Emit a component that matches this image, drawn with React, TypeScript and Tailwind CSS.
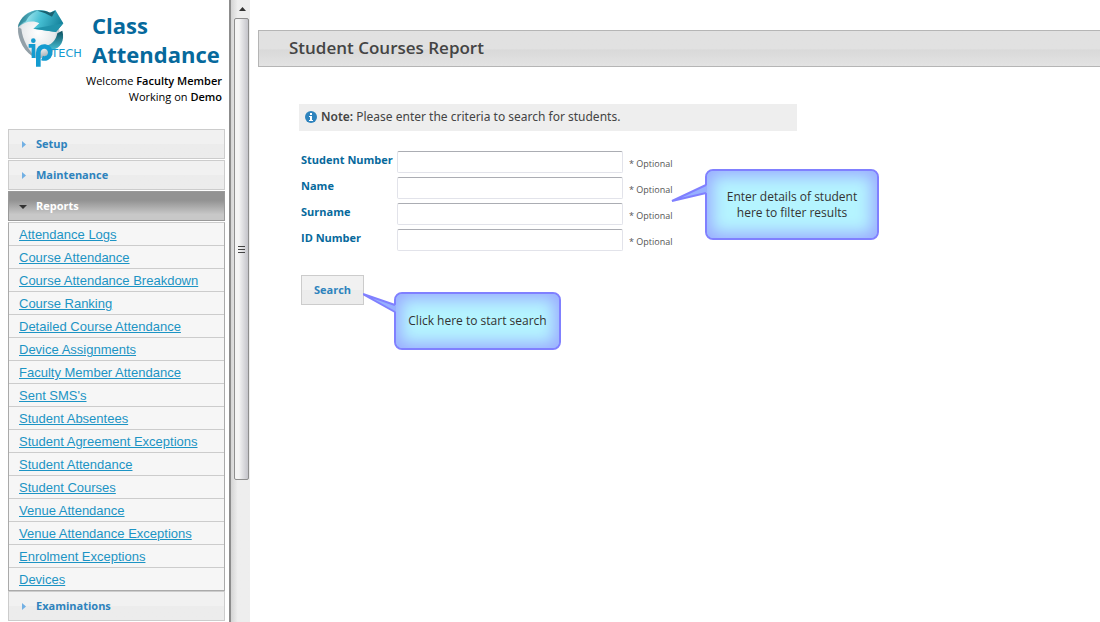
import React, { useState } from "react";

const reports = [
  "Attendance Logs",
  "Course Attendance",
  "Course Attendance Breakdown",
  "Course Ranking",
  "Detailed Course Attendance",
  "Device Assignments",
  "Faculty Member Attendance",
  "Sent SMS's",
  "Student Absentees",
  "Student Agreement Exceptions",
  "Student Attendance",
  "Student Courses",
  "Venue Attendance",
  "Venue Attendance Exceptions",
  "Enrolment Exceptions",
  "Devices",
];

const fields = [
  { id: "student-number", label: "Student Number" },
  { id: "name", label: "Name" },
  { id: "surname", label: "Surname" },
  { id: "id-number", label: "ID Number" },
];

function Logo() {
  return (
    <svg className="mt-2 h-[60px] w-[70px] shrink-0" viewBox="0 0 210 180" role="img" aria-label="IP Tech">
      <defs>
        <radialGradient id="globe" cx="48%" cy="40%" r="62%">
          <stop offset="0" stopColor="#ffffff" />
          <stop offset="0.65" stopColor="#e6e9eb" />
          <stop offset="1" stopColor="#98a3aa" />
        </radialGradient>
        <linearGradient id="sweep" x1="0" y1="0.3" x2="1" y2="0.5">
          <stop offset="0" stopColor="#17606e" />
          <stop offset="0.22" stopColor="#8fdde8" />
          <stop offset="0.5" stopColor="#46bfd3" />
          <stop offset="1" stopColor="#14809a" />
        </linearGradient>
        <linearGradient id="curl" x1="0" y1="0" x2="0" y2="1">
          <stop offset="0" stopColor="#0c4f5e" />
          <stop offset="1" stopColor="#48bfd4" />
        </linearGradient>
      </defs>
      <path d="M6 50C2 88 24 130 64 152C112 146 136 104 130 66C120 34 88 18 56 24C34 28 14 34 6 50Z" fill="url(#globe)" />
      <path d="M6 58C4 96 26 136 62 152C36 124 20 96 16 62Z" fill="#93a0a8" />
      <path d="M6 58C10 30 36 6 68 6C84 6 94 10 102 14L118 6L142 46L120 72L52 62L70 46C52 36 26 40 6 58Z" fill="url(#sweep)" />
      <path d="M6 58C14 26 40 8 68 6C50 14 36 24 30 40C20 44 12 50 6 58Z" fill="#1c7f92" opacity="0.6" />
      <path d="M52 62L142 46L120 72Z" fill="#2193ab" />
      <path d="M64 8C82 12 94 18 108 26L118 8L102 14C90 8 76 6 64 8Z" fill="#1a6272" />
      <path d="M124 76L139 68C147 98 134 120 108 126L90 114C112 108 120 94 124 76Z" fill="url(#curl)" />
      <circle cx="52" cy="98" r="7" fill="#149bd0" />
      <path d="M38 108H58V150H47V119H38Z" fill="#149bd0" />
      <path d="M67 176V134A18 18 0 1 1 78 150" fill="none" stroke="#149bd0" strokeWidth="14" />
      <text x="106" y="148" fill="#149bd0" fontFamily="DejaVu Sans, sans-serif" fontSize="34">
        TECH
      </text>
    </svg>
  );
}

function SectionButton({ label, open, onClick }: { label: string; open?: boolean; onClick?: () => void }) {
  return (
    <button
      type="button"
      aria-expanded={!!open}
      onClick={onClick}
      className={
        open
          ? "flex h-[30px] w-full items-center gap-2 border border-[#999] bg-linear-to-b from-[#939393] from-30% to-[#c8c8c8] to-80% pl-2.5 text-left text-white"
          : "flex h-[30px] w-full items-center gap-2 border border-[#ccc] bg-linear-to-b from-[#f1f1f1] from-50% to-[#ececec] to-50% pl-2.5 text-left text-[#2e83bd]"
      }
    >
      <svg className="size-[9px] shrink-0" viewBox="0 0 9 9" aria-hidden="true">
        {open ? <path d="M0 3H8L4 7Z" fill="#333" /> : <path d="M3 1L7 4.500L3 8Z" fill="#72b0e4" />}
      </svg>
      <span className="text-[11px] font-bold">{label}</span>
    </button>
  );
}

export default function App() {
  const [open, setOpen] = useState(true);
  return (
    <div className="flex h-screen overflow-hidden bg-white font-['Open_Sans',sans-serif]">
      <aside className="w-[229px] shrink-0 overflow-hidden">
        <header className="flex h-[129px] justify-between pl-4 pr-[7px]">
          <Logo />
          <div className="flex w-[130px] flex-col items-end pt-[11px]">
            <h1 className="w-full text-[22px] leading-[29px] font-bold text-[#06699c]">
              Class
              <br />
              Attendance
            </h1>
            <p className="pt-1 text-right text-[11px] leading-4 whitespace-nowrap text-black">
              Welcome <b className="font-semibold">Faculty Member</b>
              <br />
              Working on <b className="font-semibold">Demo</b>
            </p>
          </div>
        </header>
        <nav className="ml-2 mr-1 flex flex-col gap-px">
          <SectionButton label="Setup" />
          <SectionButton label="Maintenance" />
          <SectionButton label="Reports" open={open} onClick={() => setOpen(!open)} />
          {open && (
            <ul className="-mb-px border border-[#aaa] border-t-[#ccc] bg-[#f6f6f6]">
              {reports.map((name) => (
                <li key={name} className="flex h-[23px] border-b border-[#ccc] pl-2.5 last:h-[22px] last:border-b-0">
                  <a href="#" className="font-['Liberation_Sans',sans-serif] text-[13px] leading-6 text-[#1c94c4] underline">
                    {name}
                  </a>
                </li>
              ))}
            </ul>
          )}
          <SectionButton label="Examinations" />
        </nav>
      </aside>

      <div className="flex w-[21px] shrink-0 flex-col border-l-2 border-[#8c8c8c] bg-linear-to-r from-[#d4d4d4] to-[#eee] to-35% pl-[3px]" aria-hidden="true">
        <div className="flex h-[18px] items-center justify-center">
          <svg className="h-1 w-[7px]" viewBox="0 0 7 4">
            <path d="M3.500 0L7 4H0Z" fill="#333" />
          </svg>
        </div>
        <div className="flex h-[462px] w-[15px] flex-col items-center justify-center gap-0.5 rounded-xs border border-[#8e8e8e] bg-linear-to-r from-[#f4f4f4] from-30% to-[#c4c4ca]">
          <span className="h-px w-[7px] bg-[#444]" />
          <span className="h-px w-[7px] bg-[#444]" />
          <span className="h-px w-[7px] bg-[#444]" />
        </div>
      </div>

      <main className="min-w-0 flex-1 pl-2 pt-[30px]">
        <h2 className="flex h-[37px] items-center border border-r-0 border-[#b5b5b5] bg-linear-to-b from-[#e1e1e1] from-50% via-[#d9d9d9] via-55% to-[#e3e3e3] pb-px pl-[30px] text-[17px] font-semibold text-[#444]">
          Student Courses Report
        </h2>
        <div className="ml-[41px] pt-[37px]">
          <p className="flex h-[27px] w-[498px] items-center gap-1 bg-[#eee] pb-0.5 pl-1.5 font-['Noto_Sans',sans-serif] text-xs leading-4 text-[#444]">
            <svg className="size-3 shrink-0" viewBox="0 0 12 12" aria-hidden="true">
              <circle cx="6" cy="6" r="6" fill="#2e83bd" />
              <path d="M5 2H7V4H5ZM4 5H7V9H8V10H4V9H5V6H4Z" fill="#fff" />
            </svg>
            <span>
              <b className="font-semibold">Note:</b> Please enter the criteria to search for students.
            </span>
          </p>
          <form className="relative w-fit pl-0.5 pt-5" onSubmit={(e) => e.preventDefault()}>
            <div className="flex flex-col gap-1">
              {fields.map((f) => (
                <div key={f.id} className="flex h-[22px] items-start">
                  <label htmlFor={f.id} className="w-24 text-[11px] leading-[18px] font-bold whitespace-nowrap text-[#06699c]">
                    {f.label}
                  </label>
                  <input
                    id={f.id}
                    type="text"
                    className="h-[22px] w-[226px] rounded-xs border border-[#e2e3ea] border-t-[#abadb3] bg-white px-1 text-xs"
                  />
                  <span className="pl-1.5 text-[9px] leading-[26px] text-[#555]">* Optional</span>
                </div>
              ))}
            </div>
            <button
              type="submit"
              className="mt-6 h-[30px] w-[63px] border border-[#ccc] bg-linear-to-b from-[#f1f1f1] from-50% to-[#ececec] to-50% text-[11px] font-bold text-[#2e83bd]"
            >
              Search
            </button>
            <Callout className="left-[372px] top-[37px] h-[73px] w-[208px] pl-[34px]" kind="details">
              Enter details of student
              <br />
              here to filter results
            </Callout>
            <Callout className="left-[64px] top-[160px] h-[60px] w-[198px] pl-[31px]" kind="search">
              Click here to start search
            </Callout>
          </form>
        </div>
      </main>
    </div>
  );
}

function Callout({ className, kind, children }: { className: string; kind: "details" | "search"; children: React.ReactNode }) {
  return (
    <div className={`absolute flex ${className}`} role="note">
      <div className="my-px flex flex-1 items-center justify-center rounded-lg border-2 border-[#8080ff] bg-[#b5f4ff] text-center text-xs leading-4 whitespace-nowrap text-[#333] shadow-[inset_0_0_16px_5px_#9aabff]">
        {children}
      </div>
      {kind === "details" ? (
        <svg className="absolute left-0 top-4 h-5 w-9" viewBox="0 0 36 20" aria-hidden="true">
          <path d="M36 1L1 17L36 9Z" fill="#97b0ff" />
          <path d="M35 1L1 17L35 9" fill="none" stroke="#8080ff" strokeWidth="2" />
        </svg>
      ) : (
        <svg className="absolute left-0 top-0 h-6 w-[33px]" viewBox="0 0 33 24" aria-hidden="true">
          <path d="M33 14L0 3L33 21Z" fill="#97b0ff" />
          <path d="M32 14L0 3L32 21" fill="none" stroke="#8080ff" strokeWidth="2" />
        </svg>
      )}
    </div>
  );
}
